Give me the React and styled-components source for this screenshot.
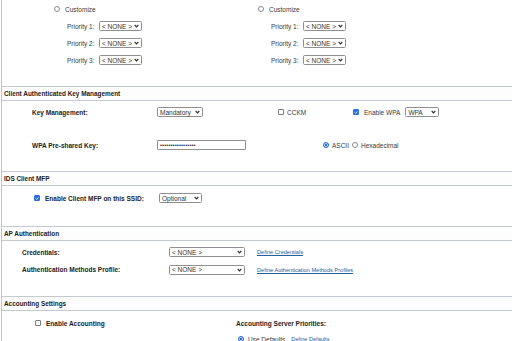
import styled, { createGlobalStyle } from "styled-components";

const GlobalStyle = createGlobalStyle`
  html, body { margin: 0; padding: 0; background: #fff; }
  body { font-family: "Liberation Sans", Arial, sans-serif; color: #333; }
`;

const Page = styled.div`
  width: 511px;
  height: 341px;
  margin-left: 1px;
  border-left: 1px solid #bcc5cc;
  overflow: hidden;
  box-sizing: border-box;
`;

const PriorityArea = styled.div`
  height: 86px;
  box-sizing: border-box;
  padding: 4px 0 0 52px;
  display: grid;
  grid-template-columns: 204px 204px;
`;

const PriorityColumn = styled.div`
  display: flex;
  flex-direction: column;
  gap: 7px;
`;

const Line = styled.div`
  height: 10px;
  display: flex;
  align-items: center;
  font-size: 6.5px;
  padding-left: ${(p) => p.$indent || 0}px;
  gap: ${(p) => p.$gap || 0}px;
`;

const Cell = styled.div`
  width: ${(p) => p.$w}px;
  flex: none;
  display: flex;
  align-items: center;
  gap: ${(p) => p.$gap || 0}px;
  margin-left: ${(p) => p.$ml || 0}px;
`;

const Label = styled.span`
  font-size: 6.5px;
  font-weight: ${(p) => (p.$bold ? "bold" : "normal")};
  color: ${(p) => (p.$bold ? "#222" : "#3a3a3a")};
  white-space: nowrap;
`;

const SectionHeader = styled.div`
  height: 15px;
  box-sizing: border-box;
  border-top: 1px solid #c4cad0;
  border-bottom: 1px solid #c4cad0;
  background: #fdfdfd;
  padding-left: 2px;
  display: flex;
  align-items: center;
  font-size: 6.4px;
  font-weight: bold;
  color: #222;
`;

const SectionBody = styled.div`
  height: ${(p) => p.$h}px;
  box-sizing: border-box;
  padding: ${(p) => p.$top}px 0 0 ${(p) => p.$left}px;
  display: flex;
  flex-direction: column;
  gap: ${(p) => p.$gap || 0}px;
`;

const SelectBox = styled.div`
  width: ${(p) => p.$w}px;
  height: 10px;
  box-sizing: border-box;
  border: 1px solid #8f8f8f;
  border-radius: 1.5px;
  background: #fff;
  display: flex;
  align-items: center;
  justify-content: space-between;
  padding: 0 2px;
  font-size: 6.5px;
  color: #333;
  flex: none;
  white-space: nowrap;
`;

const PasswordBox = styled.div`
  width: 89px;
  height: 10px;
  box-sizing: border-box;
  border: 1px solid #8f8f8f;
  border-radius: 1px;
  display: flex;
  align-items: center;
  padding-left: 2px;
  font-size: 6px;
  color: #333;
  overflow: hidden;
`;

const Radio = styled.span`
  width: 6px;
  height: 6px;
  box-sizing: border-box;
  border-radius: 50%;
  flex: none;
  border: 1px solid ${(p) => (p.$on ? "#2f6fdc" : "#8a8a8a")};
  background: ${(p) => (p.$on ? "#2f6fdc" : "#fff")};
  box-shadow: ${(p) => (p.$on ? "inset 0 0 0 0.8px #fff" : "none")};
`;

const Check = styled.span`
  width: 6px;
  height: 6px;
  box-sizing: border-box;
  border-radius: 1px;
  flex: none;
  display: flex;
  align-items: center;
  justify-content: center;
  border: 1px solid ${(p) => (p.$on ? "#2f6fdc" : "#7a7a7a")};
  background: ${(p) => (p.$on ? "#2f6fdc" : "#fff")};
`;

const Link = styled.a`
  font-size: 5.6px;
  color: #2a5d9a;
  text-decoration: underline;
  white-space: nowrap;
  cursor: pointer;
  margin-left: ${(p) => p.$ml || 0}px;
`;

const AccountingGrid = styled.div`
  display: grid;
  grid-template-columns: 201px auto;
  row-gap: 6px;
`;

const Chevron = () => (
  <svg width="5" height="4" viewBox="0 0 5 4">
    <polyline points="0.7,1 2.5,2.9 4.3,1" fill="none" stroke="#333" strokeWidth="1.2" />
  </svg>
);

const Select = ({ w, children }) => (
  <SelectBox $w={w}>
    <span>{children}</span>
    <Chevron />
  </SelectBox>
);

const Checkbox = ({ on }) => (
  <Check $on={on}>
    {on && (
      <svg width="5" height="5" viewBox="0 0 5 5">
        <polyline points="0.9,2.6 2,3.7 4.1,1.2" fill="none" stroke="#fff" strokeWidth="1" />
      </svg>
    )}
  </Check>
);

const PriorityGroup = () => (
  <PriorityColumn>
    <Line $gap={5}>
      <Radio />
      <Label>Customize</Label>
    </Line>
    {[1, 2, 3].map((n) => (
      <Line key={n} $indent={13}>
        <Cell $w={32}>
          <Label>Priority {n}:</Label>
        </Cell>
        <Select w={43}>&lt; NONE &gt;</Select>
      </Line>
    ))}
  </PriorityColumn>
);

const App = () => {
  return (
    <Page>
      <GlobalStyle />
      <PriorityArea>
        <PriorityGroup />
        <PriorityGroup />
      </PriorityArea>

      <SectionHeader>Client Authenticated Key Management</SectionHeader>
      <SectionBody $h={70} $top={6} $left={30} $gap={23}>
        <Line>
          <Cell $w={125}>
            <Label $bold>Key Management:</Label>
          </Cell>
          <Cell $w={121}>
            <Select w={46}>Mandatory</Select>
          </Cell>
          <Cell $w={75} $gap={3}>
            <Checkbox />
            <Label>CCKM</Label>
          </Cell>
          <Cell $w={100} $gap={5}>
            <Checkbox on />
            <Label>Enable WPA</Label>
            <Select w={34}>WPA</Select>
          </Cell>
        </Line>
        <Line>
          <Cell $w={125}>
            <Label $bold>WPA Pre-shared Key:</Label>
          </Cell>
          <Cell $w={166}>
            <PasswordBox>•••••••••••••••••</PasswordBox>
          </Cell>
          <Cell $w={120} $gap={3}>
            <Radio $on />
            <Label>ASCII</Label>
            <Radio />
            <Label>Hexadecimal</Label>
          </Cell>
        </Line>
      </SectionBody>

      <SectionHeader>IDS Client MFP</SectionHeader>
      <SectionBody $h={40} $top={7} $left={32}>
        <Line>
          <Cell $w={125} $gap={5}>
            <Checkbox on />
            <Label $bold>Enable Client MFP on this SSID:</Label>
          </Cell>
          <Select w={43}>Optional</Select>
        </Line>
      </SectionBody>

      <SectionHeader>AP Authentication</SectionHeader>
      <SectionBody $h={55} $top={6} $left={20} $gap={7.6}>
        <Line>
          <Cell $w={147}>
            <Label $bold>Credentials:</Label>
          </Cell>
          <Select w={76}>&lt; NONE &gt;</Select>
          <Cell $w={120} $ml={12}>
            <Link>Define Credentials</Link>
          </Cell>
        </Line>
        <Line>
          <Cell $w={147}>
            <Label $bold>Authentication Methods Profile:</Label>
          </Cell>
          <Select w={76}>&lt; NONE &gt;</Select>
          <Cell $w={120} $ml={12}>
            <Link>Define Authentication Methods Profiles</Link>
          </Cell>
        </Line>
      </SectionBody>

      <SectionHeader>Accounting Settings</SectionHeader>
      <SectionBody $h={40} $top={7} $left={33}>
        <AccountingGrid>
          <Line $gap={5}>
            <Checkbox />
            <Label $bold>Enable Accounting</Label>
          </Line>
          <Line>
            <Label $bold>Accounting Server Priorities:</Label>
          </Line>
          <div />
          <Line $gap={4} $indent={2}>
            <Radio $on />
            <Label>Use Defaults</Label>
            <Link $ml={2}>Define Defaults</Link>
          </Line>
        </AccountingGrid>
      </SectionBody>
    </Page>
  );
};

export default App;
